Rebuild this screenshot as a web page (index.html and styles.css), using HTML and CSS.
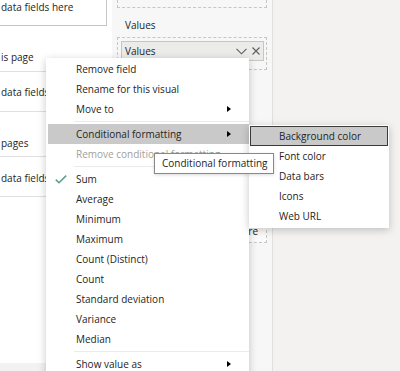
FILE: index.html
```html
<!DOCTYPE html>
<html lang="en">
<head>
    <meta charset="UTF-8">
    <meta name="viewport" content="width=device-width, initial-scale=1.0">
    <title>Field context menu</title>
    <link rel="stylesheet" href="styles.css">
</head>
<body>
    <div class="screen">
        <aside class="filters">
            <div class="drop-box"><span>data fields here</span></div>
            <div class="filter-row first"><span>is page</span></div>
            <div class="filter-row second"><span>data fields here</span></div>
            <div class="filter-row third"><span>pages</span></div>
            <div class="filter-row fourth"><span>data fields here</span></div>
            <div class="filters-foot"></div>
        </aside>

        <section class="fields">
            <div class="well-top"></div>
            <div class="well-label">Values</div>
            <div class="well">
                <div class="pill">
                    <span>Values</span>
                    <span class="pill-icons">
                        <svg width="11" height="7" viewBox="0 0 11 7"><path d="M0.5 0.8 L5.5 5.8 L10.5 0.8" fill="none" stroke="#605e5c" stroke-width="1.1"/></svg>
                        <svg width="8" height="8" viewBox="0 0 8 8"><path d="M0.5 0.5 L7.5 7.5 M7.5 0.5 L0.5 7.5" fill="none" stroke="#605e5c" stroke-width="1.1"/></svg>
                    </span>
                </div>
            </div>
            <div class="well drop"><span>Add data fields here</span></div>
        </section>

        <div class="canvas"></div>

        <ul class="menu">
            <li class="item">Remove field</li>
            <li class="item">Rename for this visual</li>
            <li class="item has-sub">Move to</li>
            <li class="sep"></li>
            <li class="item has-sub active">Conditional formatting</li>
            <li class="item disabled">Remove conditional formatting</li>
            <li class="sep"></li>
            <li class="item checked">
                <svg class="check" width="12" height="9" viewBox="0 0 12 9"><path d="M0.8 4.6 L4 7.8 L11.2 0.6" fill="none" stroke="#5a9f8b" stroke-width="1.5"/></svg>
                Sum
            </li>
            <li class="item">Average</li>
            <li class="item">Minimum</li>
            <li class="item">Maximum</li>
            <li class="item">Count (Distinct)</li>
            <li class="item">Count</li>
            <li class="item">Standard deviation</li>
            <li class="item">Variance</li>
            <li class="item">Median</li>
            <li class="sep"></li>
            <li class="item has-sub">Show value as</li>
        </ul>

        <ul class="submenu">
            <li class="item active">Background color</li>
            <li class="item">Font color</li>
            <li class="item">Data bars</li>
            <li class="item">Icons</li>
            <li class="item">Web URL</li>
        </ul>

        <div class="tooltip">Conditional formatting</div>
    </div>
</body>
</html>
```

FILE: styles.css
```css
body {
    margin: 0;
    font-family: "Open Sans", "Noto Sans", sans-serif;
    font-size: 10px;
    color: #252423;
}
.screen {
    position: relative;
    display: flex;
    width: 400px;
    height: 371px;
    overflow: hidden;
    background-color: #f3f2f1;
}
/* Filters pane */
.filters {
    width: 112px;
    background-color: #fff;
    display: flex;
    flex-direction: column;
    white-space: nowrap;
    overflow: hidden;
}
.filters span {
    line-height: 14px;
    display: block;
    padding-left: 1px;
}
.drop-box {
    width: 106px;
    height: 25px;
    border-right: 1px solid #c8c6c4;
    border-bottom: 1px solid #c8c6c4;
}
.filter-row {
    border-bottom: 1px solid #e1dfdd;
}
.filter-row.first {
    padding: 24px 0 7px;
}
.filter-row.second {
    padding: 13px 0 12px;
}
.filter-row.third {
    padding: 24px 0 6px;
}
.filter-row.fourth {
    padding: 14px 0 11px;
}
.filters-foot {
    margin-top: auto;
    height: 8px;
    background-color: #f3f2f1;
}
/* Fields well */
.fields {
    width: 160px;
    background-color: #f7f7f7;
    border-right: 1px solid #e1dfdd;
    display: flex;
    flex-direction: column;
}
.well-top {
    margin-left: 5px;
    width: 148px;
    height: 7px;
    border: 1px dashed #c8c6c4;
    border-top: none;
}
.well-label {
    line-height: 14px;
    margin: 10px 0 5px 13px;
}
.well {
    margin-left: 5px;
    width: 148px;
    border: 1px dashed #c8c6c4;
    padding: 3px 2px 8px 3px;
    box-sizing: border-box;
    width: 150px;
}
.pill {
    height: 20px;
    box-sizing: border-box;
    border: 1px solid #c8c6c4;
    background-color: #ebebea;
    display: flex;
    align-items: center;
    justify-content: space-between;
    padding: 0 3px 0 3px;
}
.pill-icons {
    display: flex;
    align-items: center;
    gap: 5px;
}
.well.drop {
    margin-top: 150px;
    height: 23px;
    padding: 0 8px 0 0;
    text-align: right;
    line-height: 20px;
    background-color: #fbfbfb;
}
.canvas {
    flex: 1;
}
/* Context menu */
.menu,
.submenu {
    position: absolute;
    margin: 0;
    list-style: none;
    background-color: #fff;
    box-shadow: 0 2px 8px rgba(0, 0, 0, 0.22);
}
.menu {
    left: 46px;
    top: 58px;
    width: 203px;
    height: 330px;
    padding: 1px 0 0;
}
.item {
    position: relative;
    height: 20px;
    line-height: 20px;
    padding-left: 30px;
    white-space: nowrap;
}
.menu .item.active {
    margin-left: 2px;
    padding-left: 28px;
    background-color: #c9c9c9;
}
.item.disabled {
    color: #a19f9d;
}
.has-sub::after {
    content: "";
    position: absolute;
    left: 181px;
    top: 7px;
    border-left: 4px solid #000;
    border-top: 3px solid transparent;
    border-bottom: 3px solid transparent;
}
.menu .item.active::after {
    left: 179px;
}
.sep {
    height: 1px;
    margin: 2px 0 2px 28px;
    background-color: #edebe9;
}
.check {
    position: absolute;
    left: 9px;
    top: 6px;
}
.submenu {
    left: 249px;
    top: 125px;
    width: 140px;
    padding: 1px 0 2px 0;
}
.submenu .item.active {
    box-sizing: border-box;
    margin: 0 1px;
    padding-left: 28px;
    line-height: 18px;
    background-color: #c9c9c9;
    border: 1px solid #3b3a39;
}
.tooltip {
    position: absolute;
    left: 154px;
    top: 153px;
    width: 120px;
    height: 21px;
    box-sizing: border-box;
    padding-left: 7px;
    line-height: 19px;
    background-color: #fff;
    border: 1px solid #8a8886;
    box-shadow: 0 1px 3px rgba(0, 0, 0, 0.15);
    white-space: nowrap;
    overflow: hidden;
}
```
